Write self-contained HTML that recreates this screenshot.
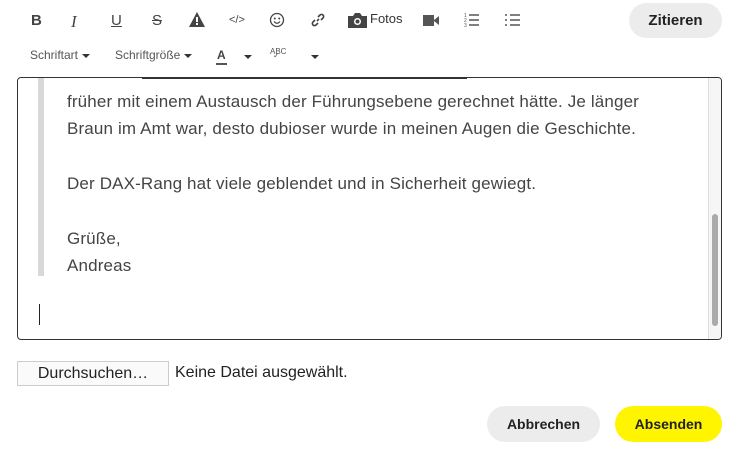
<!DOCTYPE html>
<html><head><meta charset="utf-8"><style>
body{margin:0;width:739px;height:449px;background:#fff;font-family:"Liberation Sans",sans-serif;position:relative;overflow:hidden;color:#333}
.a{position:absolute}
.ic{position:absolute;top:12px;font-size:16px;color:#444}
.t{position:absolute;left:67px;font-size:17px;color:#444;letter-spacing:0.15px;white-space:nowrap}
.car{display:inline-block;width:0;height:0;border-left:4px solid transparent;border-right:4px solid transparent;border-top:4px solid #333;vertical-align:middle;margin-left:4px}
.btn{position:absolute;border-radius:18px;font-weight:bold;font-size:14px;text-align:center;color:#222}
</style></head><body>
<div class="ic" style="left:31px;font-weight:bold;font-size:15px">B</div>
<div class="ic" style="left:71px;font-style:italic;font-family:'Liberation Serif';font-size:17px">I</div>
<div class="ic" style="left:111px;text-decoration:underline;font-size:15px">U</div>
<div class="ic" style="left:152px;text-decoration:line-through;font-size:15px">S</div>
<svg class="a" style="left:189px;top:12px" width="16" height="15"><path d="M8 0L16 15H0Z" fill="#444"/><rect x="7" y="5" width="2" height="5" fill="#fff"/><rect x="7" y="11" width="2" height="2" fill="#fff"/></svg>
<div class="ic" style="left:229px;font-size:11px;top:14px">&lt;/&gt;</div>
<svg class="a" style="left:269px;top:12px" width="16" height="16"><circle cx="8" cy="8" r="6.5" fill="none" stroke="#444" stroke-width="1.3"/><circle cx="5.8" cy="6.5" r="1" fill="#444"/><circle cx="10.2" cy="6.5" r="1" fill="#444"/><path d="M5 9.5Q8 13 11 9.5" fill="none" stroke="#444" stroke-width="1.2"/></svg>
<svg class="a" style="left:310px;top:12px" width="16" height="16"><path d="M7 9L9 7M5 8L3 10a2 2 0 003 3L8 11M11 8L13 6a2 2 0 00-3-3L8 5" fill="none" stroke="#444" stroke-width="1.6"/></svg>
<svg class="a" style="left:348px;top:12px" width="19" height="16"><path d="M0 4h5l2-3h5l2 3h5v12H0z" fill="#444"/><circle cx="9.5" cy="9.5" r="3.5" fill="#fff"/><circle cx="9.5" cy="9.5" r="2" fill="#444"/></svg>
<div class="a" style="left:370px;top:11px;font-size:13px;color:#333">Fotos</div>
<svg class="a" style="left:423px;top:15px" width="16" height="11"><rect x="0" y="0" width="11" height="11" fill="#555"/><path d="M11 5L16 1V10L11 6Z" fill="#555"/></svg>
<svg class="a" style="left:464px;top:12px" width="15" height="16" font-size="5"><g stroke="#555" stroke-width="1.5"><path d="M5 3H15M5 8H15M5 13H15"/></g><text x="0" y="5" fill="#555" font-family="Liberation Sans">1</text><text x="0" y="10" fill="#555">2</text><text x="0" y="15" fill="#555">3</text></svg>
<svg class="a" style="left:505px;top:13px" width="15" height="14"><g stroke="#555" stroke-width="1.5"><path d="M5 2H15M5 7H15M5 12H15M0 2H2M0 7H2M0 12H2"/></g></svg>
<div class="btn" style="left:629px;top:3px;width:93px;height:35px;line-height:35px;background:#ececec;font-size:15px">Zitieren</div>
<div class="a" style="left:30px;top:48px;font-size:12px;color:#555">Schriftart<span class="car"></span></div>
<div class="a" style="left:115px;top:48px;font-size:12px;color:#555">Schriftgröße<span class="car"></span></div>
<div class="a" style="left:216px;top:48px;font-size:12px;font-weight:bold;color:#444;border-bottom:2px solid #555;padding:0 1px;line-height:15px">A</div>
<div class="a" style="left:240px;top:48px"><span class="car"></span></div>
<div class="a" style="left:270px;top:47px;font-size:8px;color:#555">ABC<br><span style="position:relative;top:-5px;left:3px">✓</span></div>
<div class="a" style="left:307px;top:48px"><span class="car"></span></div>
<div class="a" style="left:17px;top:77px;width:703px;height:261px;border:1px solid #333;border-radius:4px;overflow:hidden">
 <div class="a" style="left:20px;top:0;width:6px;height:198px;background:#d6d8da"></div>
 <div class="a" style="left:124px;top:0;width:325px;border-top:1px solid #333"></div>
 <div class="a" style="left:690px;top:0;width:13px;height:261px;background:#f6f6f6;border-left:1px solid #ddd"></div>
 <div class="a" style="left:694px;top:136px;width:6px;height:112px;background:#aaa;border-radius:3px"></div>
 <div class="a" style="left:21px;top:226px;width:1px;height:21px;background:#222"></div>
</div>
<div class="t" style="top:92px">früher mit einem Austausch der Führungsebene gerechnet hätte. Je länger</div>
<div class="t" style="top:119px">Braun im Amt war, desto dubioser wurde in meinen Augen die Geschichte.</div>
<div class="t" style="top:174px">Der DAX-Rang hat viele geblendet und in Sicherheit gewiegt.</div>
<div class="t" style="top:229px">Grüße,</div>
<div class="t" style="top:256px">Andreas</div>
<div class="a" style="left:17px;top:361px;width:150px;height:23px;border:1px solid #ccc;background:#fafafa;font-size:16px;line-height:23px;text-align:center;color:#222">Durchsuchen…</div>
<div class="a" style="left:175px;top:364px;font-size:16px;color:#222">Keine Datei ausgewählt.</div>
<div class="btn" style="left:487px;top:406px;width:113px;height:36px;line-height:36px;background:#ececec">Abbrechen</div>
<div class="btn" style="left:615px;top:406px;width:107px;height:36px;line-height:36px;background:#fff500">Absenden</div>
</body></html>
